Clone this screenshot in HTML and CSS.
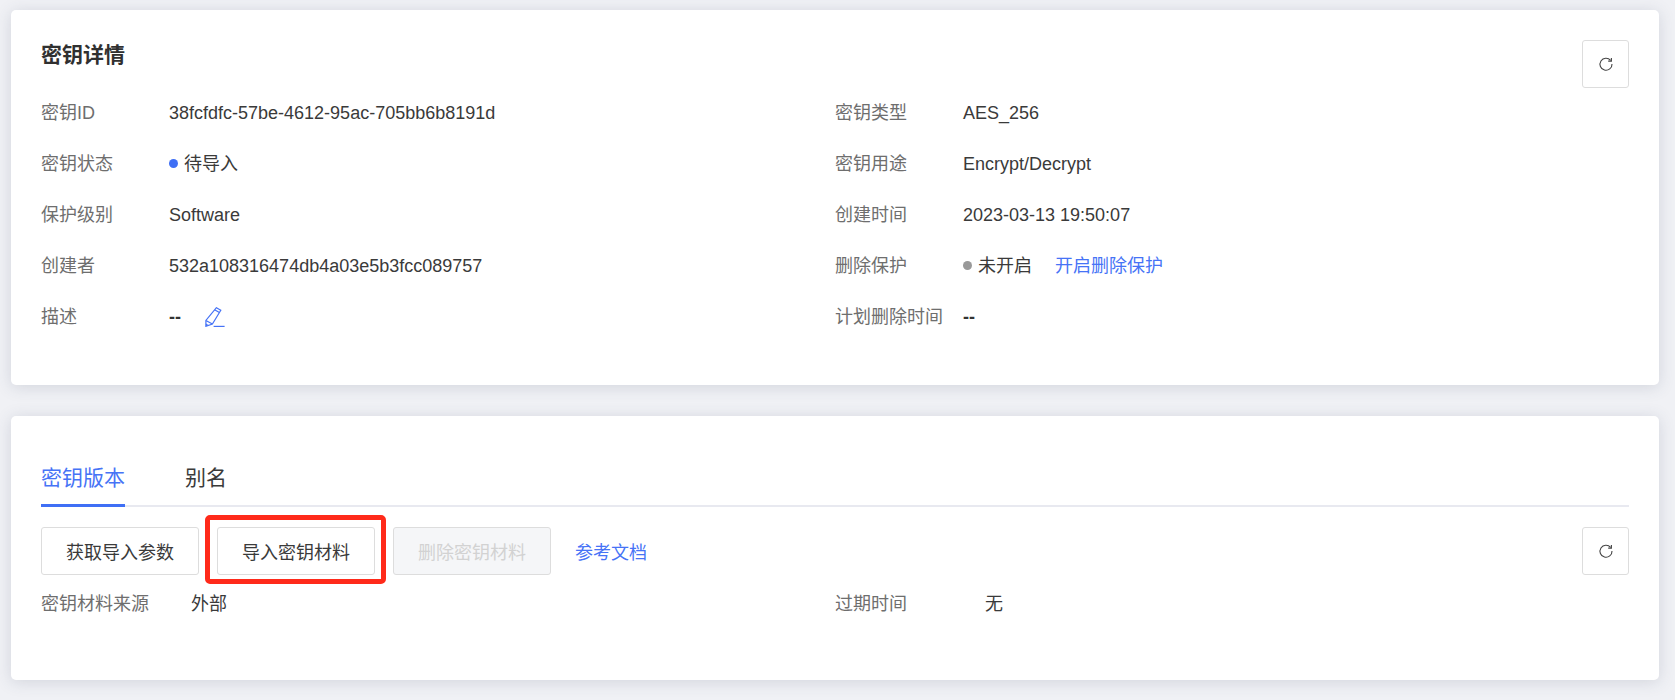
FILE: index.html
```html
<!DOCTYPE html>
<html lang="zh-CN">
<head>
<meta charset="utf-8">
<title>密钥详情</title>
<link rel="stylesheet" href="styles.css">
</head>
<body>
<section class="card card-detail">
  <div class="detail-head">
    <h2 class="title">密钥详情</h2>
    <button class="btn btn-icon" aria-label="刷新">
      <svg class="refresh" viewBox="0 0 16 16"><path d="M12.6 4.4A6 6 0 1 0 14 8" fill="none" stroke="currentColor" stroke-width="1.1"/><path d="M13.4 1.9v3.2h-3.2" fill="none" stroke="currentColor" stroke-width="1.1"/></svg>
    </button>
  </div>
  <div class="info-grid">
    <div class="row"><span class="label">密钥ID</span><span class="value">38fcfdfc-57be-4612-95ac-705bb6b8191d</span></div>
    <div class="row"><span class="label">密钥类型</span><span class="value">AES_256</span></div>
    <div class="row"><span class="label">密钥状态</span><span class="value"><i class="dot dot-blue"></i>待导入</span></div>
    <div class="row"><span class="label">密钥用途</span><span class="value">Encrypt/Decrypt</span></div>
    <div class="row"><span class="label">保护级别</span><span class="value">Software</span></div>
    <div class="row"><span class="label">创建时间</span><span class="value">2023-03-13 19:50:07</span></div>
    <div class="row"><span class="label">创建者</span><span class="value">532a108316474db4a03e5b3fcc089757</span></div>
    <div class="row"><span class="label">删除保护</span><span class="value"><i class="dot dot-gray"></i>未开启<a class="link link-protect">开启删除保护</a></span></div>
    <div class="row"><span class="label">描述</span><span class="value"><span class="dash">--</span><svg class="pencil" viewBox="0 0 20 20"><path d="M11.4 .7l4.4 2.6L7.4 17 .9 19.3l0-5.9z M10 3l4.4 2.6 M.9 13.4l6.5 3.6" fill="none" stroke="currentColor" stroke-width="1.2"/><path d="M.9 16.6l2.6 1.4-2.6 1.2z" fill="currentColor"/><path d="M8.6 19.4h11" fill="none" stroke="currentColor" stroke-width="1.2"/></svg></span></div>
    <div class="row"><span class="label">计划删除时间</span><span class="value"><span class="dash">--</span></span></div>
  </div>
</section>
<section class="card card-version">
  <div class="tabs">
    <span class="tab tab-active">密钥版本</span>
    <span class="tab">别名</span>
  </div>
  <div class="toolbar">
    <button class="btn">获取导入参数</button>
    <button class="btn btn-marked">导入密钥材料</button>
    <button class="btn btn-disabled">删除密钥材料</button>
    <a class="link link-doc">参考文档</a>
    <button class="btn btn-icon btn-end" aria-label="刷新">
      <svg class="refresh" viewBox="0 0 16 16"><path d="M12.6 4.4A6 6 0 1 0 14 8" fill="none" stroke="currentColor" stroke-width="1.1"/><path d="M13.4 1.9v3.2h-3.2" fill="none" stroke="currentColor" stroke-width="1.1"/></svg>
    </button>
  </div>
  <div class="meta">
    <div class="meta-item"><span class="meta-label">密钥材料来源</span><span class="value">外部</span></div>
    <div class="meta-item"><span class="meta-label">过期时间</span><span class="value">无</span></div>
  </div>
</section>
</body>
</html>
```
FILE: styles.css
```css
* { box-sizing: border-box; }
html, body { height: 100%; }
body {
  margin: 0;
  padding: 10px 16px 0 11px;
  background: #f0f1f5;
  font-family: "Liberation Sans", "Noto Sans CJK SC", sans-serif;
  font-size: 18px;
  color: #333;
  overflow: hidden;
}
.card {
  background: #fff;
  border-radius: 5px;
  box-shadow: 0 2px 16px rgba(60, 70, 100, 0.17);
  padding: 30px;
}
.card-detail { height: 375px; margin-bottom: 31px; }
.card-version { height: 264px; }
.detail-head { display: flex; justify-content: space-between; height: 47px; }
.title { margin: 0; padding-top: 1px; font-size: 21px; line-height: 28px; font-weight: 700; color: #303030; }
.info-grid {
  display: grid;
  grid-template-columns: 1fr 1fr;
  grid-auto-rows: 51px;
}
.row { display: flex; align-items: center; }
.label { width: 128px; flex: none; color: #6e6e6e; line-height: 24px; }
.value { display: inline-flex; align-items: center; color: #3a3a3a; line-height: 24px; }
.dash { font-weight: 700; color: #333; }
.dot { width: 9px; height: 9px; border-radius: 50%; margin-right: 6px; flex: none; }
.dot-blue { background: #3f6ff5; }
.dot-gray { background: #999; }
.link { color: #4673f6; }
.link-protect { margin-left: 23px; }
.pencil { width: 20px; height: 20px; margin-left: 24px; color: #4673f6; }
.btn {
  height: 48px;
  width: 158px;
  padding: 0;
  background: #fff;
  border: 1px solid #ddd;
  border-radius: 3px;
  font: inherit;
  color: #3a3a3a;
  flex: none;
}
.btn-icon { width: 47px; display: flex; align-items: center; justify-content: center; }
.refresh { width: 16px; height: 16px; color: #444; }
.btn-disabled { background: #f5f6f8; color: #d2d2d2; }
.btn-end { margin-left: auto; }
.btn-marked { position: relative; }
.btn-marked::after {
  content: "";
  position: absolute;
  inset: -13px -12px -10px -13px;
  border: 5px solid #ff2a1a;
  border-radius: 5px;
  pointer-events: none;
}
.tabs {
  display: flex;
  gap: 60px;
  margin-top: 9px;
  height: 52px;
  border-bottom: 2px solid #e8e9f0;
}
.tab { font-size: 21px; line-height: 30px; padding-top: 8px; height: 52px; color: #3a3a3a; }
.tab-active { color: #4673f6; border-bottom: 3px solid #3f6ff5; }
.toolbar { display: flex; align-items: center; gap: 18px; margin-top: 20px; }
.link-doc { margin-left: 6px; }
.meta { display: grid; grid-template-columns: 1fr 1fr; margin-top: 17px; }
.meta-item { display: flex; align-items: center; line-height: 24px; }
.meta-label { width: 150px; color: #6e6e6e; flex: none; }
```
